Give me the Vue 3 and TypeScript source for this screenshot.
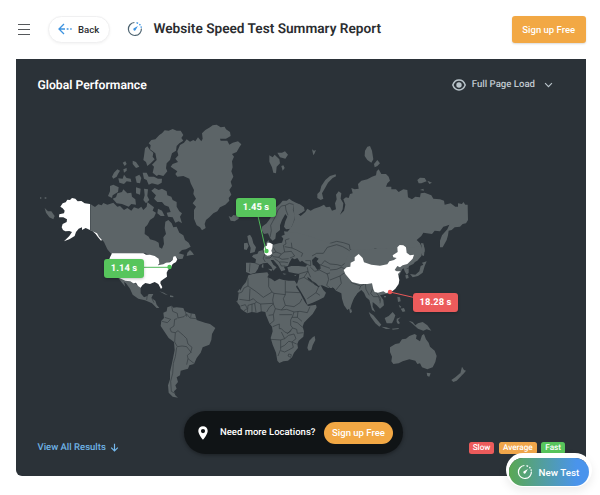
<script setup lang="ts">
interface Region {
  id: string
  x: number
  y: number
  land: string[]
  borders?: string
  water?: string
  active?: string
}

interface Marker {
  label: string
  tone: 'fast' | 'slow'
  place: string
}

// Every region is drawn at three times its size around its own origin.
const regions: Region[] = [
  {
    id: 'north-america',
    x: 30,
    y: 110,
    land: [
      'M181 282L195 291 205 283 215 286 220 279 232 284 250 278 262 290 270 288 282 300 292 294 304 302 312 292 325 296 334 290 340 300 350 290 352 276 362 284 372 292 368 302 378 308 372 322 360 330 352 345 345 352 344 372 356 380 360 388 376 392 386 398 388 412 396 416 402 402 400 382 408 372 404 355 406 335 415 330 425 340 430 352 440 350 448 368 460 376 465 390 476 398 482 410 468 418 456 420 446 430 462 434 458 446 446 448 436 440 424 452 400 466 388 466 378 442 345 430 244 432 232 418 222 396 206 378 194 368 181 360Z',
      'M388 75L396 70 404 61 416 62 428 57 440 62 452 62 460 75 454 84 460 92 448 100 440 108 438 122 426 130 420 150 410 160 408 175 412 184 400 198 386 194 380 198 368 188 372 170 366 164 380 150 376 130 360 118 362 106 356 100 364 90 376 88Z',
      'M345 115L352 109 360 120 370 128 368 140 374 148 362 160 352 168 348 156 340 150 342 138Z',
      'M338 188L350 188 356 200 372 200 384 206 396 206 395 218 384 224 366 220 356 224 350 210 342 206Z',
      'M246 200L252 188 262 178 270 182 264 192 260 200 250 206Z',
      'M265 205L278 206 282 194 290 204 302 206 304 216 290 214 282 222 268 218Z',
      'M308 152L318 156 328 170 318 174 308 162Z',
      'M278 158l8 -4 4 8 -6 6zM280 178l10 -4 0 8 -8 6z',
      'M316 200L328 194 334 204 330 220 320 218Z',
      'M240 228L250 224 266 232 264 246 248 256 246 264 234 258 240 244Z',
      'M262 250L276 246 280 238 292 250 304 248 306 260 316 268 318 284 304 282 296 290 276 282 260 280 248 266 258 262Z',
      'M318 232l14 4 -2 18 -12 -4zM342 236l12 2 -2 20 6 12 -10 10 -8 -10 4 -14z',
      'M364 242L374 234 386 240 396 236 410 244 412 256 424 260 428 270 440 276 440 290 448 304 456 310 450 320 456 340 446 334 436 338 428 322 414 320 410 308 422 306 416 290 404 286 396 276 382 276 372 266 378 256Z',
      'M384 296l12 6 8 16 -12 0 -10 -8z',
      'M472 428l8 -8 6 6 6 8 -12 2 -10 2z',
      'M44 294L54 304 64 304 74 318 70 328 58 322 48 308ZM30 262l4 0 0 4 -4 0zM44 262l5 0 0 4 -5 0z',
    ],
    active:
      'M180 282L164 280 154 273 143 274 136 266 126 264 120 270 112 269 107 277 98 280 91 290 98 295 104 302 102 310 88 313 87 322 100 322 111 328 110 336 98 342 95 352 99 360 106 364 118 363 126 366 118 378 102 394 118 388 134 378 138 366 146 356 156 352 156 360 167 354 180 360 191 365 201 370 207 380 216 390 213 392 203 380 197 372 188 364 180 361Z',
  },
  {
    id: 'americas',
    x: 30,
    y: 250,
    land: [
      'M262 80L300 92 312 96 322 106 332 112 332 130 342 142 352 138 356 132 370 132 364 144 376 152 380 164 388 174 380 174 366 160 345 151 325 146 308 134 300 116 288 100 282 96 286 110 276 98Z',
      'M388 124l14 4 12 8 -10 -3zM420 136l10 2 0 4 -10 -1z',
      'M400 188L410 184 412 172 425 167 430 173 440 172 460 174 464 184 480 190 495 192 500 210 525 218 540 222 556 234 546 252 544 270 538 284 518 292 512 308 500 324 492 342 478 346 474 356 452 362 450 376 440 382 444 396 436 406 440 416 432 424 436 436 444 443 428 440 416 428 414 406 420 388 420 366 426 340 430 320 434 300 432 276 416 264 404 246 392 228 394 212 402 204Z',
      'M618 155l8 -6 8 6zM622 126l8 -10 0 14z',
    ],
    borders:
      'M425 168L428 184 442 190 444 204 462 200 470 192 480 204 498 206M466 184L470 200M484 190L482 202M396 214L412 218 422 208 404 202M442 206L434 208 432 228 420 236 424 246 436 248 444 242 460 256 470 266 474 282 486 292 482 308 472 316 474 326 492 340M474 326L470 344M436 248L434 276 442 290 456 288 470 290 484 308M440 292L436 320 430 340 428 370 422 394 424 424 438 432M352 134L350 150M366 146L372 158',
    active:
      'M246 10L340 10 348 14 360 14 374 18 386 26 388 40 384 46 400 43 408 38 420 37 428 30 430 20 436 18 442 28 438 36 428 42 424 50 414 60 410 68 411 80 400 88 392 94 391 100 397 112 393 117 385 102 374 96 360 102 346 99 337 106 332 113 324 108 318 98 310 100 301 94 286 92 268 84 250 80 236 66 232 44 240 22Z',
  },
  {
    id: 'north-atlantic',
    x: 170,
    y: 110,
    land: [
      'M30 105L42 98 50 88 60 95 70 90 76 94 84 82 94 94 98 86 96 70 106 60 120 52 128 46 140 44 152 52 164 50 168 58 180 66 182 78 168 86 150 86 152 92 172 92 178 104 188 98 204 94 214 103 208 112 200 126 186 132 192 140 186 154 188 172 184 184 190 200 182 215 186 228 178 240 184 254 176 264 178 272 166 284 150 292 142 304 130 310 118 322 108 330 104 342 107 354 96 361 90 352 80 346 72 326 72 300 78 290 68 280 78 266 70 252 72 240 62 220 58 206 40 198 22 200 16 192 22 184 2 170 8 162 24 156 16 146 25 136 22 124Z',
      'M176 318L184 322 190 315 206 318 206 326 194 334 182 332Z',
      'M298 136L308 142 314 134 328 148 330 160 320 170 318 190 310 188 306 172 298 155Z',
      'M322 128L336 128 345 124 354 134 346 146 330 142ZM334 168l6 -2 4 8 -6 8zM426 118l6 4 6 -2 -4 10 -4 6z',
      'M497 193L480 198 466 210 454 228 450 244 442 252 442 264 452 270 460 266 456 250 464 236 474 218 488 204 498 199Z',
      'M276 362L276 350 290 340 300 326 308 310 318 292 330 282 338 272 350 272 358 266 366 272 378 278 392 284 402 292 404 302 394 308 382 316 380 334 376 344 362 356 348 358 342 350 346 334 352 320 346 312 336 330 330 346 330 360 318 370 316 386 308 392 300 384 294 370 282 372Z',
      'M232 378l8 -4 6 10 4 16 8 12 -4 14 -14 4 2 -16 -6 -14zM222 400l10 -2 4 10 -6 12 -8 -2z',
    ],
    borders:
      'M300 382L304 362 302 346 316 320 324 300 334 288 346 286 348 300 354 316M346 286L358 280 372 284 370 300 376 316 372 336 366 350M366 350L380 364 374 380 388 400 404 408',
  },
  {
    id: 'russia',
    x: 320,
    y: 110,
    land: [
      'M-80 278L-60 284 -50 296 -52 306 -66 312 -58 318 -44 306 -38 296 -28 302 -18 296 0 290 12 284 18 292 30 290 36 302 48 298 45 280 50 268 48 254 56 244 64 250 62 266 70 280 68 298 60 314 72 302 76 284 70 268 78 262 86 264 90 252 98 250 94 234 104 238 116 236 114 222 124 212 142 208 156 200 168 196 170 184 176 178 184 192 198 192 206 200 210 212 202 220 198 230 214 230 214 238 228 238 236 246 250 238 262 240 264 262 276 268 286 260 300 262 302 250 314 248 334 256 340 266 360 268 372 272 374 284 392 280 406 290 414 290 414 280 426 282 430 276 436 284 443 284 444 330 438 340 428 342 420 350 404 352 395 360 386 362 384 376 380 390 368 412 360 412 360 392 366 376 382 358 388 344 378 348 370 350 360 364 344 362 336 372 310 368 304 378 290 390 300 400 306 414 300 436 280 462 240 480 0 470 -45 450 -110 410 -106 380 -100 368 -85 350 -76 330Z',
      'M135 122L142 110 150 108 156 122 160 148 154 158 142 150 134 138ZM162 162l10 -12 8 10 -8 8 -8 4z',
      'M292 210L300 203 314 204 320 214 304 220 296 220ZM322 212l14 6 -8 4zM300 240l10 -4 2 6z',
      'M303 400l7 0 4 18 -2 20 -6 -2 0 -20z',
    ],
    borders:
      'M-2 420L22 422 24 402 50 394 70 398 88 404 90 418 108 430 122 432M122 428L130 422 158 424 164 416 178 420 200 418 216 424M110 432L130 446 168 452 200 448',
  },
  {
    id: 'europe-africa',
    x: 220,
    y: 230,
    land: [
      'M78 98L92 98 106 100 108 88 96 80 100 74 112 72 116 64 128 60 136 46 140 36 146 30 148 40 160 44 176 40 186 38 190 26 184 18 194 14 192 4 240 10 480 90 460 170 430 170 415 184 402 204 394 225 390 240 382 232 372 206 368 188 354 184 345 174 325 174 306 166 296 168 288 160 276 152 284 164 296 172 302 166 310 180 318 188 312 202 296 210 278 218 262 224 256 208 242 184 230 164 236 148 238 132 224 130 206 126 202 112 214 108 236 108 256 110 262 104 246 92 240 96 232 84 224 88 216 84 208 98 204 108 192 110 196 120 184 124 174 106 160 90 152 90 160 104 170 112 160 122 154 110 142 98 130 100 118 104 114 116 106 128 92 132 78 126Z',
      'M85 136L98 132 110 130 128 128 142 127 146 134 142 142 154 146 164 154 178 146 190 150 206 152 224 152 232 164 228 170 240 188 248 204 256 218 264 228 288 224 290 232 278 252 262 268 252 278 248 290 252 304 250 320 236 332 232 342 234 354 222 368 216 382 204 392 190 394 178 399 172 392 168 368 158 344 152 324 158 304 156 290 148 280 144 270 138 256 136 246 124 244 112 248 95 246 82 250 72 244 62 236 60 228 52 218 54 206 56 190 68 168 78 156Z',
      'M264 345L268 332 278 322 284 318 286 330 278 346 274 360 266 362 262 354Z',
      'M126 104l4 -2 0 12 -5 -2zM144 116l14 2 -4 6zM188 130l12 2 -8 2zM222 136l8 -2 -4 4z',
    ],
    water: 'M276 90L286 80 296 86 290 94 300 104 302 116 292 120 284 108 278 104ZM262 140l10 8 10 12 -8 -4 -10 -8z',
    borders:
      'M56 190L66 186 72 174 84 168 84 146 80 140M84 168L110 186 130 202 156 186 146 170 146 142M156 186L162 190 196 194 196 152M196 186L240 188M196 194L190 206 196 226 222 230 240 218 246 206M162 190L158 210 160 222 148 232 140 246M90 176L88 212 58 208M88 212L100 206 110 216 122 222 124 244M110 216L104 220 84 226 82 248M122 222L160 220M104 220L108 246M96 222L96 246M62 228L76 224 82 236 72 242M160 222L166 236 184 240 196 226M146 256L160 254 166 236M184 240L200 238 222 246 240 244 262 248 270 230M160 254L162 272 150 282M222 246L218 258 212 270 212 286 218 294 204 310 194 306 184 296 178 296 178 282 158 290M178 254L216 254M234 244L232 262 216 262M232 262L246 274M218 274L232 278 248 292M218 294L230 298 232 310 250 308M152 328L182 330 194 326M182 330L182 358 174 378M194 326L184 306M194 326L206 316 222 312 228 326 216 336 206 334 194 346 182 352M216 336L220 352 206 360 194 366 182 362M206 372l8 2 -2 8 -8 -4zM216 336L230 342M202 310L214 302M90 100L88 126M106 100L118 104M128 60L134 72 130 86 136 96M136 84L150 84 158 76 150 76M156 70L168 66 160 52M168 66L184 72 194 66 190 46 198 42 196 30 208 26M194 66L214 64 224 78 210 84M158 80L176 82 184 72M176 82L186 88 206 86M164 86L178 96 192 96 204 98M178 96L184 108M184 108L196 108M194 50L216 54 214 38M216 54L230 60 248 70 244 80M256 100L272 108 272 92 256 92M236 132L264 124 262 112M236 148L252 142 264 124M252 142L286 164M272 112L284 124 298 120 322 132 326 148 320 166 330 174M264 124L272 142M296 170L288 188 262 206M288 188L300 196M298 120L300 104 322 112 348 122 362 118 372 120M320 132L344 124 358 132 362 148 344 168 336 174M290 70L310 70 322 52 350 44 368 50 386 60 396 70 408 72M276 78L290 70M304 104L314 92 330 102 352 104 364 108 380 96M344 112L360 122M362 148L386 166',
    active:
      'M133 50L141 47 142 38 150 38 158 43 157 54 154 62 157 70 151 76 142 77 134 72 132 60Z',
  },
  {
    id: 'asia-pacific',
    x: 330,
    y: 230,
    land: [
      'M40 110L60 60 272 50 278 60 274 78 262 92 250 98 238 104 236 112 236 128 230 134 224 124 220 112 180 190 166 192 150 196 160 210 162 226 150 236 140 226 128 216 128 230 136 246 126 240 118 210 108 202 102 188 94 180 82 190 72 204 62 220 60 234 52 240 42 226 36 206 34 190 18 182 0 160 0 110Z',
      'M58 238l6 0 2 8 -6 4z',
      'M116 246L130 256 144 272 154 284 148 290 136 280 122 260ZM154 290l14 2 14 4 -14 1z',
      'M164 264L176 258 188 246 196 256 192 268 186 280 170 280ZM200 266l12 -4 -8 8 6 10 -6 2 -4 -6zM186 296l20 -2 0 3 -18 2z',
      'M202 200l8 2 2 12 -8 2zM212 236l10 -2 4 10 -8 2zM206 224l8 6 -4 4zM162 198l6 0 0 4 -6 0z',
      'M236 272L248 276 256 286 264 280 278 276 292 286 304 302 290 298 280 302 264 296 248 282Z',
      'M180 352L196 342 208 340 216 328 228 326 238 318 254 312 260 316 258 326 270 334 276 316 282 312 288 328 296 338 300 350 314 362 320 378 316 396 308 412 292 418 276 412 270 400 262 402 256 392 238 388 218 394 206 400 190 402 184 394 186 380 180 366Z',
      'M290 428l12 2 -4 10 -6 -2zM396 410l6 10 6 2 -10 12 -8 0zM390 430l6 6 -16 16 -10 4 -6 -6 12 -8z',
      'M226 136l8 -2 2 10 -8 2zM240 132L256 134 268 124 272 108 280 104 276 98 290 94 284 108 278 128 264 138 248 142ZM274 38l8 10 2 16 -6 10 0 -20z',
    ],
    borders:
      'M0 120L20 118 34 112 44 116M0 150L30 138 44 128M30 138L34 160 18 180M62 148L64 158 92 168 104 162M92 168L88 178M106 162L108 178 118 196M128 176L122 190 130 200 146 200 150 214M136 184L152 206 150 220M230 116L238 114',
    active:
      'M41 120L50 112 61 110 62 98 74 92 74 82 86 72 98 84 102 97 124 104 150 107 172 103 178 94 192 90 200 84 190 82 188 76 203 66 202 52 209 45 220 46 228 52 230 68 240 76 252 74 248 86 242 92 232 102 218 106 210 112 202 108 194 120 200 124 212 124 204 132 208 150 206 162 196 176 184 186 168 189 160 184 144 188 134 186 130 178 126 160 112 162 90 162 66 156 54 142 46 132Z',
  },
]

const markers: Marker[] = [
  { label: '1.45 s', tone: 'fast', place: 'germany' },
  { label: '1.14 s', tone: 'fast', place: 'usa' },
  { label: '18.28 s', tone: 'slow', place: 'china' },
]

const legend: { label: string; tone: string }[] = [
  { label: 'Slow', tone: 'slow' },
  { label: 'Average', tone: 'average' },
  { label: 'Fast', tone: 'fast' },
]
</script>

<template>
  <div class="page">
    <header class="topbar">
      <button class="menu" aria-label="Menu"><span></span><span></span><span></span></button>
      <button class="back">
        <svg class="back-icon" viewBox="0 0 14 12">
          <path d="M6 1 1 6l5 5M1 6h6M8.7 6h1.8M12.2 6h1.5" />
        </svg>
        <span>Back</span>
      </button>
      <svg class="gauge" viewBox="0 0 16 16">
        <path class="ring" d="M7.4 1.5a6.5 6.5 0 1 0 7 6.1" />
        <path class="dash" d="M9.5 1.7l1.6.6M12.4 3.1l1 1.1M14 5.4l.4 1.4" />
        <path class="needle" d="M10.9 5.1 8.9 8.6a1.3 1.3 0 1 1-1.6-1.5z" />
      </svg>
      <h1>Website Speed Test Summary Report</h1>
      <button class="signup">Sign up Free</button>
    </header>

    <main class="card">
      <div class="card-head">
        <h2>Global Performance</h2>
        <div class="metric">
          <svg class="eye" viewBox="0 0 14 12">
            <path d="M.8 6C2 2.8 4.300 1.100 7 1.100S12 2.800 13.200 6C12 9.200 9.700 10.900 7 10.900S2 9.200.8 6z" />
            <circle cx="7" cy="6" r="2.700" />
          </svg>
          <span>Full Page Load</span>
          <svg class="chevron" viewBox="0 0 10 6"><path d="M1.200 1 5 4.800 8.800 1" /></svg>
        </div>
      </div>

      <div class="map">
        <svg class="world" viewBox="16 110 570 300">
          <g
            v-for="region in regions"
            :key="region.id"
            :transform="`translate(${region.x} ${region.y}) scale(0.33333)`"
          >
            <path v-for="(shape, i) in region.land" :key="i" class="land" :d="shape" />
            <path v-if="region.water" class="water" :d="region.water" />
            <path v-if="region.borders" class="border" :d="region.borders" />
          </g>
          <g
            v-for="region in regions"
            :key="region.id + '-active'"
            :transform="`translate(${region.x} ${region.y}) scale(0.33333)`"
          >
            <path v-if="region.active" class="active" :d="region.active" />
          </g>
          <path class="link fast" d="M258 216 266 251M143 267.300H170" />
          <path class="link slow" d="M390 292 414 297.500" />
          <circle class="dot fast" cx="266.500" cy="251" r="2.200" />
          <circle class="dot fast" cx="169.500" cy="267" r="2.200" />
          <circle class="dot slow" cx="390" cy="292" r="2.200" />
        </svg>
        <span v-for="m in markers" :key="m.place" class="marker" :class="[m.tone, m.place]">{{ m.label }}</span>
      </div>

      <div class="card-foot">
        <a class="results">
          <span>View All Results</span>
          <svg viewBox="0 0 10 10"><path d="M5 .8v8M1.300 5.200 5 8.900l3.700-3.700" /></svg>
        </a>
        <div class="legend">
          <span v-for="item in legend" :key="item.label" :class="item.tone">{{ item.label }}</span>
        </div>
      </div>

      <div class="banner">
        <svg class="pin" viewBox="0 0 10 14">
          <path
            fill-rule="evenodd"
            d="M5 .3C2.300.3.300 2.300.300 4.900.300 8.300 5 13.700 5 13.700S9.700 8.300 9.700 4.900C9.700 2.300 7.700.3 5 .3zM5 3a2.100 2.100 0 1 1 0 4.200A2.100 2.100 0 0 1 5 3z"
          />
        </svg>
        <span>Need more Locations?</span>
        <button>Sign up Free</button>
      </div>
    </main>

    <button class="new-test">
      <svg class="gauge light" viewBox="0 0 16 16">
        <path class="ring" d="M7.400 1.500a6.500 6.500 0 1 0 7 6.100" />
        <path class="dash" d="M9.500 1.700l1.600.6M12.400 3.100l1 1.100M14 5.400l.4 1.400" />
        <path class="needle" d="M10.900 5.100 8.900 8.600a1.300 1.300 0 1 1-1.600-1.500z" />
      </svg>
      <span>New Test</span>
    </button>
  </div>
</template>

<style>
body {
  background: #fff;
}
</style>

<style scoped>
.page {
  position: relative;
  box-sizing: border-box;
  width: 600px;
  height: 495px;
  overflow: hidden;
  font-family: Roboto, 'Liberation Sans', sans-serif;
  font-weight: 500;
  color: #2b2d30;
  background: #fff;
  text-rendering: geometricPrecision;
}
button {
  font: inherit;
  border: 0;
  padding: 0;
  margin: 0;
  white-space: nowrap;
}
svg {
  display: block;
  flex: none;
}
.topbar {
  display: flex;
  align-items: center;
  box-sizing: border-box;
  height: 59px;
  padding: 0 14px 1px 18px;
}
.menu {
  display: flex;
  flex-direction: column;
  gap: 3.5px;
  width: 12px;
  margin-top: 1px;
  background: none;
}
.menu span {
  height: 1.2px;
  background: #55585b;
}
.back {
  display: flex;
  align-items: center;
  box-sizing: border-box;
  gap: 6px;
  width: 62px;
  height: 27px;
  margin-left: 18px;
  padding-left: 9px;
  border: 1px solid #f0f0f1;
  border-radius: 14px;
  font-size: 9.6px;
  color: #2b2d30;
  background: #fff;
  box-shadow: 0 1px 3px rgba(0, 0, 0, 0.05);
}
.back-icon {
  width: 14px;
  height: 12px;
  fill: none;
  stroke: #3d93e0;
  stroke-width: 1.3;
}
.gauge {
  width: 16px;
  height: 16px;
  margin-left: 16.5px;
  fill: none;
}
.ring {
  stroke: #4c626f;
  stroke-width: 1.2;
}
.dash {
  stroke: #3d93e0;
  stroke-width: 1.3;
}
.needle {
  fill: #3d93e0;
}
h1 {
  margin: 0 0 0 11px;
  font-size: 13.65px;
  line-height: 20px;
  font-weight: 600;
  white-space: nowrap;
}
.signup {
  width: 74.5px;
  height: 27px;
  margin-left: auto;
  border-radius: 3px;
  font-size: 9.5px;
  color: #fff;
  background: #f2a844;
  box-shadow: 0 1px 2px rgba(0, 0, 0, 0.15);
}
.card {
  position: relative;
  display: flex;
  flex-direction: column;
  width: 570.5px;
  height: 417px;
  margin-left: 15.5px;
  border-radius: 0 0 6px 6px;
  background: #2b3238;
}
.card-head {
  display: flex;
  align-items: center;
  justify-content: space-between;
  height: 51px;
  padding: 0 33px 0 22px;
}
h2 {
  margin: 0;
  font-size: 12.2px;
  font-weight: 600;
  color: #fff;
}
.metric {
  display: flex;
  align-items: center;
  font-size: 9.6px;
  color: #c0c9cf;
}
.eye {
  width: 14px;
  height: 12px;
  margin-right: 6px;
  fill: none;
  stroke: #b9c4ca;
  stroke-width: 1.5;
}
.eye circle {
  fill: #b9c4ca;
  stroke: none;
}
.chevron {
  width: 9px;
  height: 6px;
  margin-left: 9px;
  fill: none;
  stroke: #b9c4ca;
  stroke-width: 1.3;
}
.map {
  position: relative;
  height: 300px;
}
.world {
  width: 570px;
  height: 300px;
  margin-left: 0.5px;
}
.land {
  fill: #5c6467;
}
.water {
  fill: #2b3238;
}
.border {
  fill: none;
  stroke: #333b40;
  stroke-width: 2;
  stroke-linejoin: round;
}
.active {
  fill: #fff;
}
.link {
  fill: none;
  stroke-width: 1;
}
.link.fast {
  stroke: #4fb859;
}
.link.slow {
  stroke: #e85858;
}
.dot.fast {
  fill: #4dc155;
}
.dot.slow {
  fill: #ee5555;
}
.marker {
  position: absolute;
  box-sizing: border-box;
  width: 40px;
  height: 19px;
  border-radius: 3px;
  font-size: 9.4px;
  line-height: 19px;
  font-weight: 700;
  letter-spacing: 0.1px;
  text-align: center;
  color: #fff;
  box-shadow: 0 1px 3px rgba(0, 0, 0, 0.25);
}
.marker.germany {
  left: 220.5px;
  top: 88px;
}
.marker.usa {
  left: 88.5px;
  top: 148.5px;
}
.marker.china {
  left: 397.5px;
  top: 183px;
  width: 45px;
}
.fast {
  background: #57c55c;
}
.slow {
  background: #ec5b5b;
}
.average {
  background: #f0a64a;
}
.card-foot {
  display: flex;
  justify-content: space-between;
  align-items: center;
  height: 13px;
  margin-top: 31.5px;
  padding: 0 21px 0 22px;
}
.results {
  display: flex;
  align-items: center;
  gap: 4px;
  margin-top: -1px;
  font-size: 9.5px;
  font-weight: 500;
  color: #6fb2e6;
}
.results svg {
  width: 9px;
  height: 9px;
  fill: none;
  stroke: #74b8ec;
  stroke-width: 1.3;
}
.legend {
  display: flex;
  gap: 4.5px;
  font-size: 8.2px;
  line-height: 12.5px;
  color: #fff;
}
.legend span {
  padding: 0 4px;
  border-radius: 2.5px;
}
.banner {
  position: absolute;
  left: 168.5px;
  top: 352px;
  display: flex;
  align-items: center;
  box-sizing: border-box;
  width: 219px;
  height: 43px;
  padding: 0 10px 0 14px;
  border-radius: 22px;
  font-size: 9.5px;
  color: #fff;
  background: #101416;
  box-shadow: 0 1px 4px rgba(0, 0, 0, 0.4);
}
.pin {
  width: 10px;
  height: 14px;
  margin-right: 12px;
  fill: #fff;
}
.banner button {
  width: 69px;
  height: 22px;
  margin-left: auto;
  border-radius: 11px;
  font-size: 9.5px;
  color: #fff;
  background: #f2a844;
}
.new-test {
  position: absolute;
  left: 509px;
  top: 458px;
  display: flex;
  align-items: center;
  width: 80px;
  height: 28px;
  border-radius: 14px;
  font-size: 9.8px;
  color: #fff;
  background: linear-gradient(90deg, #5aa853, #4a94ec 85%);
  box-shadow: 0 -2px 0 3px #fff, 0 2px 10px 3px rgba(0, 0, 0, 0.08);
}
.new-test .gauge {
  margin: 0 5.5px 0 8px;
}
.light .ring,
.light .dash {
  stroke: #fff;
}
.light .needle {
  fill: #fff;
}
</style>
